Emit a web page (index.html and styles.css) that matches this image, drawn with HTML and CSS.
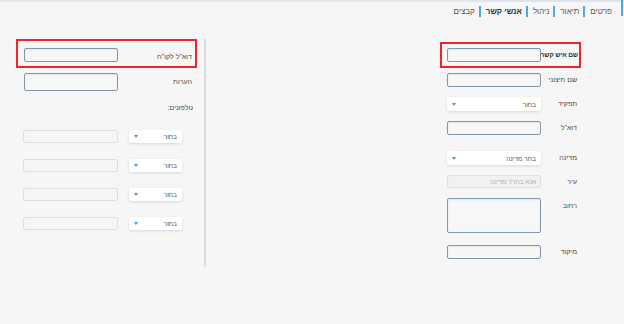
FILE: index.html
```html
<!DOCTYPE html>
<html lang="he" dir="rtl">
<head>
  <meta charset="UTF-8">
  <title>אנשי קשר</title>
  <link rel="stylesheet" href="styles.css">
</head>
<body>
  <div class="top-line"></div>
  <nav class="tabs">
    <span class="tab">פרטים</span>
    <span class="tab">תיאור</span>
    <span class="tab">ניהול</span>
    <span class="tab active">אנשי קשר</span>
    <span class="tab">קבצים</span>
  </nav>

  <div class="page">
    <!-- right column: contact details -->
    <div class="col-right">
      <div class="row highlight">
        <label class="bold">שם איש קשר</label>
        <input type="text" class="field">
      </div>
      <div class="row">
        <label>שם חיצוני</label>
        <input type="text" class="field">
      </div>
      <div class="row">
        <label>תפקיד</label>
        <div class="select"><span>בחור</span><i class="arrow"></i></div>
      </div>
      <div class="row">
        <label>דוא"ל</label>
        <input type="text" class="field">
      </div>
      <div class="row gap-top">
        <label>מדינה</label>
        <div class="select"><span>בחר מדינה</span><i class="arrow"></i></div>
      </div>
      <div class="row">
        <label>עיר</label>
        <input type="text" class="field disabled" placeholder="אנא בחר/י מדינה" disabled>
      </div>
      <div class="row top">
        <label>רחוב</label>
        <textarea class="field area"></textarea>
      </div>
      <div class="row small-gap">
        <label>מיקוד</label>
        <input type="text" class="field">
      </div>
    </div>

    <!-- left column: email, notes, phones -->
    <div class="col-left">
      <div class="row highlight first">
        <label>דוא"ל לקו"ח</label>
        <input type="text" class="field">
      </div>
      <div class="row">
        <label>הערות</label>
        <input type="text" class="field tall">
      </div>
      <div class="phones-label">טלפונים:</div>
      <div class="phone-row">
        <div class="select small"><span>בחור</span><i class="arrow"></i></div>
        <input type="text" class="field light">
      </div>
      <div class="phone-row">
        <div class="select small"><span>בחור</span><i class="arrow"></i></div>
        <input type="text" class="field light">
      </div>
      <div class="phone-row">
        <div class="select small"><span>בחור</span><i class="arrow"></i></div>
        <input type="text" class="field light">
      </div>
      <div class="phone-row">
        <div class="select small"><span>בחור</span><i class="arrow"></i></div>
        <input type="text" class="field light">
      </div>
    </div>
  </div>
</body>
</html>
```

FILE: styles.css
```css
body {
  margin: 0;
  background: #f6f6f6;
  font-family: "Liberation Sans", "DejaVu Sans", sans-serif;
  font-size: 7px;
  color: #4a4a4a;
  direction: rtl;
  height: 324px;
  overflow: hidden;
}

.top-line {
  height: 2px;
  background: linear-gradient(to left, #dde5ec 0, #dde5ec 155px, #e9e9e9 155px);
}

.tabs {
  display: flex;
  align-items: center;
  height: 16px;
  margin-top: -2px;
  margin-right: 1px;
  padding-right: 9px;
  border-right: 2px solid #52a8de;
  font-size: 8px;
  color: #555;
}

.tab {
  padding-left: 5px;
  margin-left: 4px;
  border-left: 2px solid #52a8de;
  line-height: 11px;
  margin-top: 6px;
}

.tab:last-child {
  border-left: none;
}

.tab.active {
  font-weight: bold;
  color: #333;
}

.page {
  display: flex;
  justify-content: space-between;
  padding-top: 26px;
}

.col-right {
  width: 141px;
  margin-right: 43px;
}

.col-left {
  width: 181px;
  padding: 0 7px 0 16px;
  margin-top: -3px;
  border-right: 2px solid #dcdcdc;
  height: 228px;
}

.row {
  display: flex;
  align-items: center;
  padding: 4px 3px 4px 6px;
  border: 1px solid transparent;
}

.row label {
  flex: 1;
  min-width: 0;
  line-height: 10px;
  white-space: nowrap;
}

.row label.bold {
  font-weight: bold;
  font-size: 6.5px;
  letter-spacing: -0.1px;
  color: #333;
}

.row .field,
.row .select {
  flex-shrink: 0;
}

.row.highlight {
  border: 2px solid #f0242b;
  padding: 4px 1px 4px 5px;
}

.col-left .row {
  padding: 4px 4px 4px 7px;
}

.col-left .row.highlight.first {
  padding: 7px 3px 4px 6px;
}

.col-left .row.highlight.first label {
  margin-top: 3px;
}

.row.gap-top {
  margin-top: 6px;
}

.row.small-gap {
  margin-top: 2px;
}

.row.top {
  align-items: flex-start;
}

.row.top label {
  margin-top: 3px;
}

.field {
  box-sizing: border-box;
  width: 94px;
  height: 14px;
  border: 1.5px solid #8797ab;
  border-radius: 2px;
  background: #f7f7f7;
  box-shadow: inset 0 1px 2px rgba(0, 0, 0, 0.08);
  padding: 0 4px;
  font-family: inherit;
  font-size: 6.5px;
  margin: 0;
}

.field.tall {
  height: 18px;
}

.field.area {
  height: 35px;
  resize: none;
}

.field.disabled {
  border: 1px solid #e0e0e0;
  background: #f1f1f1;
  box-shadow: none;
  height: 13px;
}

.field.disabled::placeholder {
  color: #b0b0b0;
}

.field.light {
  width: 95px;
  height: 13px;
  border: 1px solid #dedede;
  background: #f6f6f6;
  box-shadow: none;
}

.select {
  box-sizing: border-box;
  width: 94px;
  height: 14px;
  background: #fff;
  border-radius: 2px;
  box-shadow: 0 1px 3px rgba(0, 0, 0, 0.12);
  display: flex;
  align-items: center;
  justify-content: space-between;
  padding: 0 5px 0 5px;
  font-size: 6.5px;
  color: #555;
}

.select.small {
  width: 53px;
  height: 13px;
}

.arrow {
  width: 0;
  height: 0;
  border-left: 2px solid transparent;
  border-right: 2px solid transparent;
  border-top: 3px solid #3b9ad6;
}

.phones-label {
  margin: 6px 4px 0 0;
  line-height: 12px;
}

.phone-row {
  display: flex;
  align-items: center;
  gap: 11px;
  padding: 0 15px 0 7px;
  margin-top: 16px;
}

.phone-row + .phone-row {
  margin-top: 16px;
}
```
